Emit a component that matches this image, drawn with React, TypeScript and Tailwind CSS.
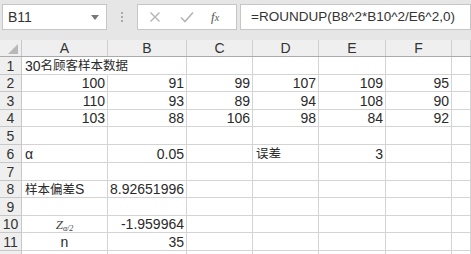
import React from "react";

const colW = [86, 79, 66, 66, 67, 66, 19];
const rowH = [18, 17, 18, 17, 18, 18, 18, 17, 18, 17, 18, 10];

type Cell = { t: React.ReactNode; align?: "l" | "r" | "c"; overflow?: boolean };

const cjk = (s: string) => (
  <span className="font-['Noto_Sans_CJK_SC',sans-serif] text-[12.5px] leading-none">{s}</span>
);

const data: Record<number, Record<number, Cell>> = {
  1: { 0: { t: <>30{cjk("名顾客样本数据")}</>, align: "l", overflow: true } },
  2: { 0: { t: "100" }, 1: { t: "91" }, 2: { t: "99" }, 3: { t: "107" }, 4: { t: "109" }, 5: { t: "95" } },
  3: { 0: { t: "110" }, 1: { t: "93" }, 2: { t: "89" }, 3: { t: "94" }, 4: { t: "108" }, 5: { t: "90" } },
  4: { 0: { t: "103" }, 1: { t: "88" }, 2: { t: "106" }, 3: { t: "98" }, 4: { t: "84" }, 5: { t: "92" } },
  6: { 0: { t: "α", align: "l" }, 1: { t: "0.05" }, 3: { t: cjk("误差"), align: "l" }, 4: { t: "3" } },
  8: { 0: { t: <>{cjk("样本偏差")}S</>, align: "l" }, 1: { t: "8.92651996" } },
  10: {
    0: {
      t: (
        <span className="font-['Liberation_Serif'] italic text-[13px] text-[#444]">
          Z<sub className="text-[8px]">α/2</sub>
        </span>
      ),
      align: "c",
    },
    1: { t: "-1.959964" },
  },
  11: { 0: { t: "n", align: "c" }, 1: { t: "35" } },
};

const font = "font-['Liberation_Sans','Noto_Sans_CJK_SC',sans-serif]";

export default function App() {
  const letters = ["A", "B", "C", "D", "E", "F", ""];
  return (
    <div className={`w-[471px] h-[254px] overflow-hidden bg-white ${font} text-[14px] text-[#2a2a2a]`}>
      {/* toolbar */}
      <div className="h-[40px] bg-[#e6e6e6] flex items-start pt-[4px] pl-[2px]">
        <div className="w-[105px] h-[26px] bg-white border border-[#c6c6c6] flex items-center justify-between pl-[5px] pr-[7px]">
          <span className="text-[14px] text-[#333]">B11</span>
          <svg width="8" height="5" viewBox="0 0 8 5">
            <path d="M0 0 H8 L4 5 Z" fill="#777" />
          </svg>
        </div>
        <div className="w-[30px] h-[26px] flex flex-col items-center justify-center gap-[2px]">
          <span className="w-[2px] h-[2px] bg-[#aaa]" />
          <span className="w-[2px] h-[2px] bg-[#aaa]" />
          <span className="w-[2px] h-[2px] bg-[#aaa]" />
        </div>
        <div className="w-[100px] h-[26px] bg-white border border-[#c6c6c6] flex items-center">
          <svg width="12" height="12" viewBox="0 0 12 12" className="ml-[11px]">
            <path d="M1.5 1.5 L10.5 10.5 M10.5 1.5 L1.5 10.5" stroke="#b5b5b5" strokeWidth="1.4" />
          </svg>
          <svg width="14" height="12" viewBox="0 0 14 12" className="ml-[19px]">
            <path d="M1 6.5 L5 10.5 L13 1.5" stroke="#b5b5b5" strokeWidth="1.6" fill="none" />
          </svg>
          <span className="ml-[17px] font-['Liberation_Serif'] italic text-[13px] text-[#555]">
            f<span className="text-[10px]">x</span>
          </span>
        </div>
        <div className="ml-[3px] flex-1 h-[26px] bg-white border border-[#c6c6c6] flex items-center pl-[10px]">
          <span className="text-[13.5px] text-[#333] whitespace-nowrap">=ROUNDUP(B8^2*B10^2/E6^2,0)</span>
        </div>
      </div>
      {/* header row */}
      <div className="flex h-[17px] bg-[#efefef] border-b border-[#ababab]">
        <div className="w-[22px] border-r border-[#c8c8c8] relative shrink-0">
          <svg width="10" height="10" viewBox="0 0 10 10" className="absolute right-[3px] bottom-[2px]">
            <path d="M10 0 L10 10 L0 10 Z" fill="#b8b8b8" />
          </svg>
        </div>
        {letters.map((l, i) => (
          <div
            key={i}
            style={{ width: colW[i] }}
            className="shrink-0 border-r border-[#d0d0d0] flex items-center justify-center text-[14px] text-[#333] leading-none"
          >
            {l}
          </div>
        ))}
      </div>
      {/* rows */}
      {rowH.map((h, r) => {
        const rn = r + 1;
        const row = data[rn] || {};
        return (
          <div key={r} className="flex" style={{ height: h }}>
            <div className="w-[22px] shrink-0 bg-[#efefef] border-r border-b border-[#c8c8c8] flex items-center justify-center text-[14px] text-[#333] leading-none">
              {rn <= 11 ? rn : ""}
            </div>
            {colW.map((w, c) => {
              const cell = row[c];
              const al = cell?.align ?? "r";
              return (
                <div
                  key={c}
                  style={{ width: w }}
                  className={`shrink-0 border-r border-b border-[#d4d4d4] flex items-center leading-none whitespace-nowrap ${
                    cell?.overflow ? "relative z-10 !border-r-transparent" : ""
                  } ${al === "l" ? "justify-start pl-[3px]" : al === "c" ? "justify-center" : "justify-end pr-[2px]"}`}
                >
                  {cell?.t}
                </div>
              );
            })}
          </div>
        );
      })}
    </div>
  );
}
